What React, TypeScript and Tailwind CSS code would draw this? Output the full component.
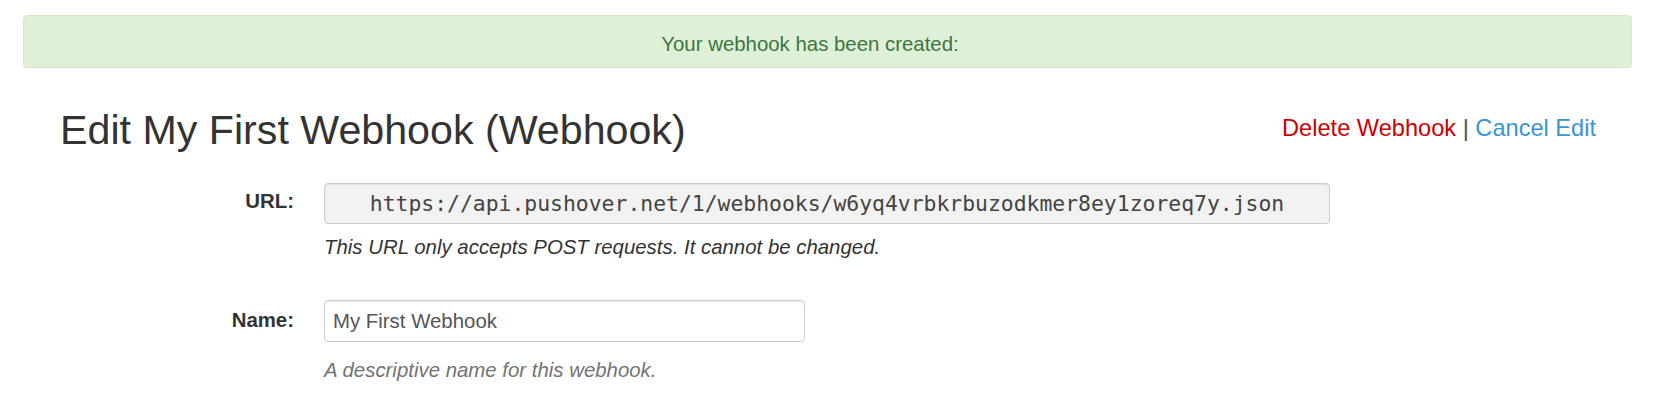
export default function App() {
  return (
    <div className="min-h-screen bg-white pt-[15px] font-['Liberation_Sans',Arial,sans-serif] text-[#333]">
      <div className="pl-[23px] pr-[24px]">
        <div className="rounded-[4px] border border-[#d6e9c6] bg-[#dff0d8] pt-[18px] pb-[13px] pl-[15px] pr-[50px] text-center text-[20.4px] leading-[20px] text-[#3c763d]">
          Your webhook has been created:
        </div>
      </div>

      <div className="px-[60px]">
        <div className="mt-[39px] flex items-start justify-between">
          <h1 className="text-[41.2px] leading-[46px] font-normal text-[#333]">
            Edit My First Webhook (Webhook)
          </h1>
          <div className="mt-[7px] text-[23.6px] leading-[28px] whitespace-pre">
            <a href="#" className="text-[#cc0000]">Delete Webhook</a>
            <span className="text-[#555]"> | </span>
            <a href="#" className="text-[#3a94d7]">Cancel Edit</a>
          </div>
        </div>

        <form className="mt-[30px] flex flex-col gap-[43px]">
          <div className="flex gap-[30px]">
            <label className="w-[234px] shrink-0 pt-[8px] text-right text-[20.4px] leading-[20px] font-bold">
              URL:
            </label>
            <div className="flex flex-col">
              <input
                readOnly
                value="https://api.pushover.net/1/webhooks/w6yq4vrbkrbuzodkmer8ey1zoreq7y.json"
                className="h-[41px] w-[1006px] rounded-[4px] border border-[#ccc] bg-[#f2f2f2] text-center font-['DejaVu_Sans_Mono',monospace] text-[21.4px] text-[#444] shadow-[inset_0_1px_1px_rgba(0,0,0,0.075)] outline-none"
              />
              <p className="mt-[13px] text-[20.4px] leading-[20px] italic text-[#333]">
                This URL only accepts POST requests. It cannot be changed.
              </p>
            </div>
          </div>

          <div className="flex gap-[30px]">
            <label className="w-[234px] shrink-0 pt-[10px] text-right text-[20.4px] leading-[20px] font-bold">
              Name:
            </label>
            <div className="flex flex-col">
              <input
                defaultValue="My First Webhook"
                className="h-[42px] w-[481px] rounded-[4px] border border-[#ccc] bg-white pl-[8px] text-[20.4px] text-[#555] shadow-[inset_0_1px_1px_rgba(0,0,0,0.075)] outline-none"
              />
              <p className="mt-[18px] text-[20.4px] leading-[20px] italic text-[#737373]">
                A descriptive name for this webhook.
              </p>
            </div>
          </div>
        </form>
      </div>
    </div>
  );
}
